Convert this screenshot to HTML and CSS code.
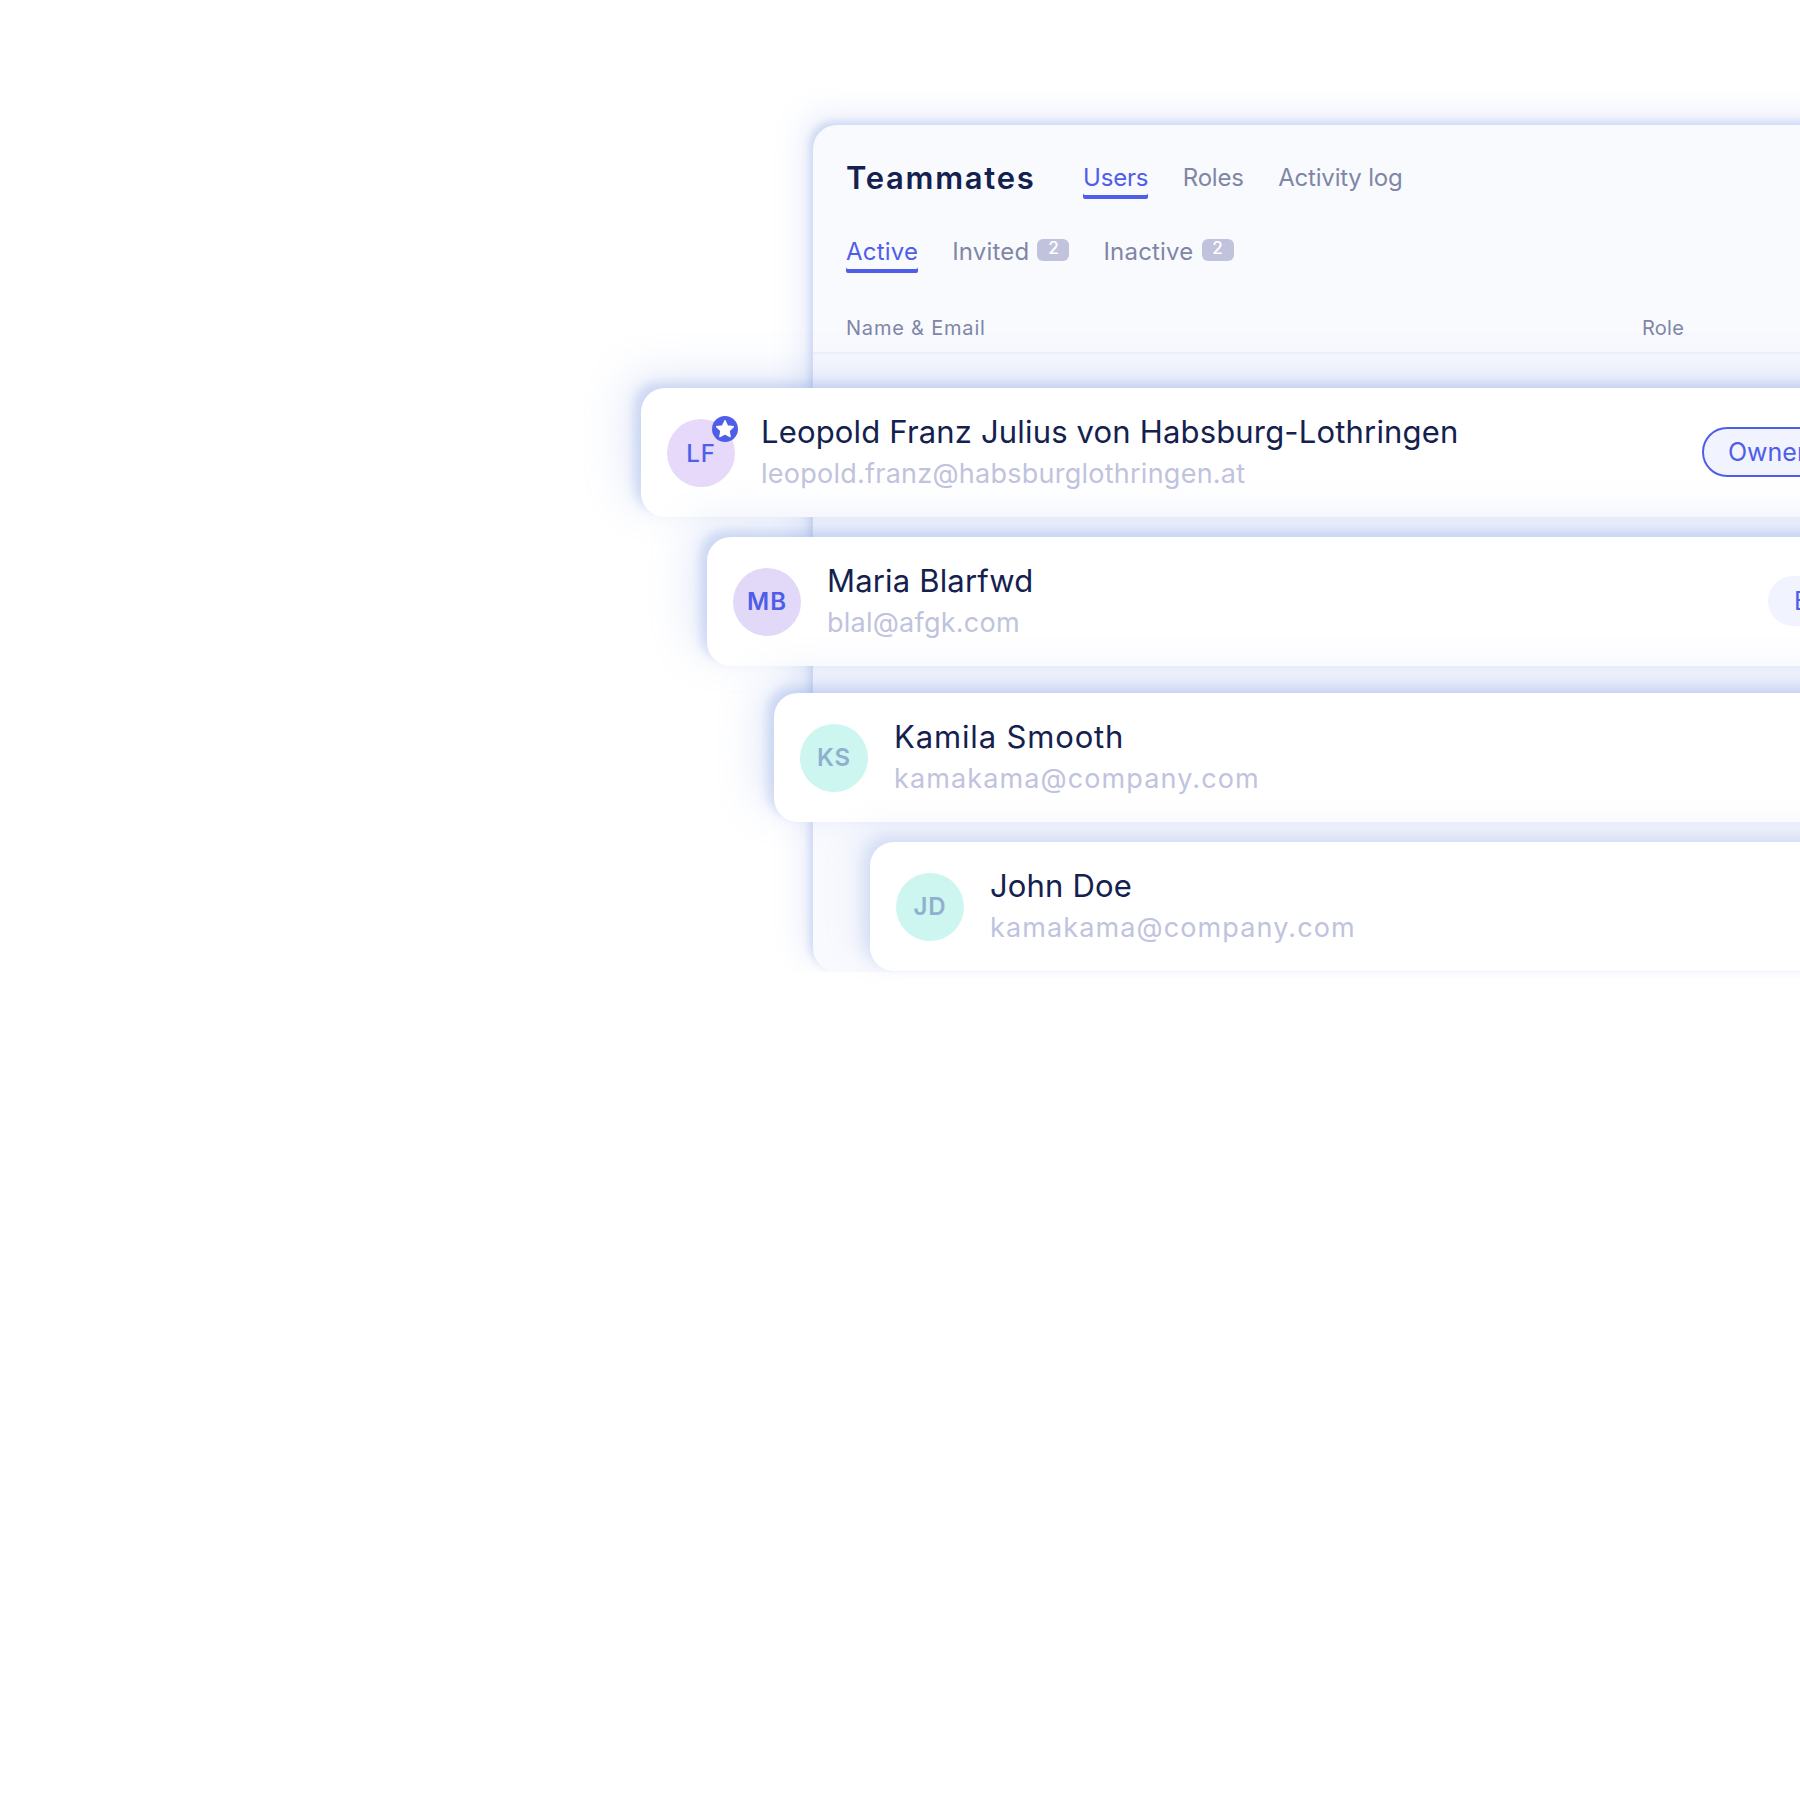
FILE: index.html
```html
<!DOCTYPE html>
<html lang="en">
<head>
<meta charset="utf-8">
<title>Teammates</title>
<link rel="stylesheet" href="styles.css">
</head>
<body>
<main class="stage">
  <section class="panel">
    <header class="top">
      <h1 class="title">Teammates</h1>
      <nav class="tabs">
        <a class="tab on">Users</a>
        <a class="tab">Roles</a>
        <a class="tab">Activity log</a>
      </nav>
    </header>
    <nav class="subtabs">
      <a class="tab on">Active</a>
      <a class="tab">Invited<span class="badge">2</span></a>
      <a class="tab">Inactive<span class="badge">2</span></a>
    </nav>
    <div class="thead">
      <span>Name &amp; Email</span>
      <span class="role-col">Role</span>
    </div>
  </section>
  <div class="stack">
    <article class="card c1">
      <div class="avatar purple light">LF
        <svg class="star" viewBox="0 0 26 26"><circle cx="13" cy="13" r="13" fill="#4f5ee8"/><path d="M13 4.6l2.6 5.3 5.8.8-4.2 4.1 1 5.8-5.2-2.7-5.2 2.7 1-5.8-4.2-4.1 5.8-.8z" fill="#fff" stroke="#fff" stroke-width="1.2" stroke-linejoin="round"/></svg>
      </div>
      <div class="who"><div class="name">Leopold Franz Julius von Habsburg-Lothringen</div><div class="mail">leopold.franz@habsburglothringen.at</div></div>
      <span class="pill owner">Owner</span>
    </article>
    <article class="card c2">
      <div class="avatar lilac">MB</div>
      <div class="who"><div class="name">Maria Blarfwd</div><div class="mail">blal@afgk.com</div></div>
      <span class="pill editor">Editor</span>
    </article>
    <article class="card c3">
      <div class="avatar teal">KS</div>
      <div class="who"><div class="name wide">Kamila Smooth</div><div class="mail wide">kamakama@company.com</div></div>
    </article>
    <article class="card c4">
      <div class="avatar teal">JD</div>
      <div class="who"><div class="name">John Doe</div><div class="mail wide">kamakama@company.com</div></div>
    </article>
  </div>
</main>
</body>
</html>
```
FILE: styles.css
```css
html, body { margin: 0; padding: 0; background: #fff; overflow: hidden; }
body { width: 1800px; height: 1800px; font-family: Inter, "Liberation Sans", sans-serif; color: #14214f; }
.stage { position: relative; width: 1800px; height: 1800px; overflow: hidden; padding-top: 125px; box-sizing: border-box; }

.panel { margin-left: 813px; width: 1100px; height: 847px; box-sizing: border-box; background: #f9fafe; border-radius: 24px 0 0 24px; padding: 0 0 0 33px; box-shadow: -4px -4px 6px rgba(120,150,225,.24), -10px -10px 30px rgba(120,150,225,.18); clip-path: inset(-60px -60px 0 -60px); }
.top { display: flex; align-items: flex-start; padding-top: 35px; height: 34px; }
.title { margin: 0; font-size: 31px; line-height: 36px; font-weight: 600; letter-spacing: 1.7px; width: 237px; flex: none; }
.tabs { display: flex; gap: 34.5px; }
.tab { display: flex; font-size: 24px; line-height: 30px; height: 32px; color: #7f86a6; padding: 3px 0 0; letter-spacing: -.2px; }
.tab.on { color: #4f5ee8; box-shadow: 0 4px 0 #4f5ee8; border-radius: 2px; }
.subtabs { display: flex; gap: 34px; margin-top: 40px; height: 34px; }
.subtabs .tab { letter-spacing: .2px; }
.badge { display: block; margin: 2px 0 0 8px; width: 32px; height: 22px; border-radius: 6px; background: #c1c3dc; color: #fff; font-size: 17px; line-height: 19px; font-weight: 500; text-align: center; letter-spacing: 0; }
.thead { display: flex; margin: 45px 0 0 -33px; padding: 0 0 0 33px; height: 39px; border-bottom: 2px solid #eef1fb; font-size: 20px; line-height: 30px; color: #7f86a6; letter-spacing: .8px; }
.thead .role-col { position: absolute; left: 1642px; letter-spacing: .25px; }

.stack { position: absolute; left: 0; top: 388px; width: 2400px; display: flex; flex-direction: column; }
.card { display: flex; align-items: center; height: 129px; box-sizing: border-box; background: #fff; border-radius: 24px; padding-left: 26px; box-shadow: -7px -6px 10px rgba(120,150,225,.26), -16px -14px 44px rgba(120,150,225,.2); position: relative; }
.c1 { margin-left: 641px; width: 1300px; }
.c2 { margin: 20px 0 0 707px; width: 1300px; }
.c3 { margin: 27px 0 0 774px; width: 1300px; }
.c4 { margin: 20px 0 0 870px; width: 1300px; box-shadow: -6px -5px 14px rgba(120,150,225,.2), -16px -14px 32px rgba(120,150,225,.12); }
.avatar { position: relative; flex: none; width: 68px; height: 68px; border-radius: 50%; display: flex; align-items: center; justify-content: center; font-size: 24px; font-weight: 600; letter-spacing: 1px; }
.purple { background: #e6d9fa; color: #4f5ee8; }
.light { font-weight: 500; letter-spacing: .8px; padding-top: 2px; box-sizing: border-box; }
.lilac { background: #e2d9f9; color: #4f5ee8; }
.teal { background: #ccf6ef; color: #8fb0cf; }
.star { position: absolute; right: -3px; top: -3px; width: 26px; height: 26px; }
.who { margin-left: 26px; display: flex; flex-direction: column; padding-top: 2px; }
.name { font-size: 31px; line-height: 40px; color: #14214f; letter-spacing: .17px; }
.mail { font-size: 27px; line-height: 44px; color: #c0c3de; letter-spacing: .25px; }
.name.wide { letter-spacing: .85px; }
.mail.wide { letter-spacing: 1.12px; }
.pill { position: absolute; top: 39px; height: 50px; box-sizing: border-box; border-radius: 25px; background: #f1f3fe; color: #4f5ee8; font-size: 25px; line-height: 46px; padding: 0 24px; border: 2px solid transparent; }
.owner { left: 1061px; border-color: #4f5ee8; }
.editor { left: 1061px; }
```
